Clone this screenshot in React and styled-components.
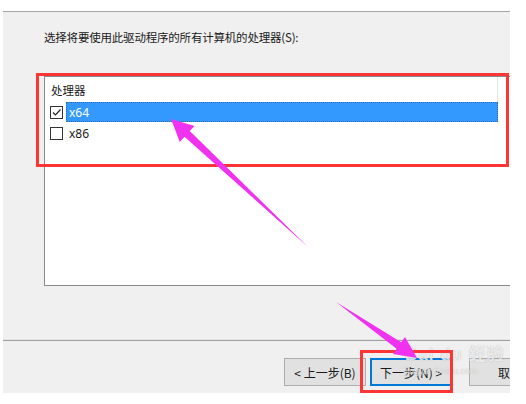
import React from 'react'
import styled, { createGlobalStyle } from 'styled-components'

const GlobalStyle = createGlobalStyle`
  html, body {
    margin: 0;
    padding: 0;
    background: #ffffff;
    font-family: "Noto Sans CJK SC", "Noto Sans", "Liberation Sans", sans-serif;
  }
`

const Page = styled.div`
  position: relative;
  width: 526px;
  height: 404px;
  overflow: hidden;
  background: #ffffff;
  padding-top: 11px;
  box-sizing: border-box;
`

const Dialog = styled.div`
  margin-left: 3px;
  width: 507px;
  height: 382px;
  background: #f0f0f0;
  border-top: 1px solid #a5a5a5;
  box-sizing: border-box;
  display: flex;
  flex-direction: column;
  overflow: hidden;
`

const Body = styled.div`
  height: 327px;
  padding: 17px 0 0 41px;
  box-sizing: border-box;
  display: flex;
  flex-direction: column;
`

const Prompt = styled.div`
  font-size: 11.5px;
  line-height: 16px;
  color: #1a1a1a;
  letter-spacing: -0.2px;
`

const ListBox = styled.div`
  margin-top: 31px;
  width: 480px;
  height: 210px;
  background: #ffffff;
  border: 1px solid #8a8a8a;
  box-sizing: border-box;
  display: flex;
  flex-direction: column;
`

const Header = styled.div`
  height: 25px;
  width: 453px;
  display: flex;
  align-items: center;
  padding-left: 6px;
  font-size: 11.5px;
  color: #1a1a1a;
  border-right: 1px solid #e5e5e5;
  box-sizing: border-box;
`

const Row = styled.div`
  height: 20px;
  display: flex;
  align-items: center;
  padding-left: 5px;
  margin-bottom: 1px;
`

const Box = styled.span`
  width: 11px;
  height: 11px;
  border: 1px solid #333333;
  background: #ffffff;
  display: flex;
  align-items: center;
  justify-content: center;
  flex-shrink: 0;
`

const Label = styled.span`
  margin-left: 3px;
  width: ${p => (p.$selected ? '432px' : 'auto')};
  height: 20px;
  display: flex;
  align-items: center;
  padding-left: 2px;
  box-sizing: border-box;
  font-family: "Noto Sans", "Liberation Sans", sans-serif;
  font-size: 12px;
  color: ${p => (p.$selected ? '#ffffff' : '#1a1a1a')};
  background: ${p => (p.$selected ? '#3399ff' : 'transparent')};
  border: 1px ${p => (p.$selected ? 'dotted #2d6aa8' : 'solid transparent')};
`

const Separator = styled.div`
  height: 2px;
  border-top: 1px solid #e3e3e3;
  border-bottom: 1px solid #a0a0a0;
  box-sizing: border-box;
`

const Footer = styled.div`
  flex: 1;
  display: flex;
  padding: 17px 0 0 281px;
  box-sizing: border-box;
`

const Button = styled.div`
  width: 82px;
  height: 28px;
  flex-shrink: 0;
  margin-right: ${p => p.$gap || 0}px;
  display: flex;
  align-items: center;
  justify-content: center;
  font-size: 12px;
  color: #1a1a1a;
  background: #e1e1e1;
  border: 1px solid ${p => (p.$default ? '#0078d7' : '#adadad')};
  box-shadow: ${p => (p.$default ? 'inset 0 0 0 1px #0078d7' : 'none')};
  box-sizing: border-box;
`

const Overlay = styled.svg`
  position: absolute;
  left: 0;
  top: 0;
  pointer-events: none;
`

const Watermark = styled.div`
  position: absolute;
  left: 405px;
  top: 345px;
  display: flex;
  flex-direction: column;
  color: rgba(255, 255, 255, 0.75);
  text-shadow: 0 0 1px rgba(120, 120, 120, 0.6);
  font-family: "Liberation Sans", "Noto Sans CJK SC", sans-serif;
  pointer-events: none;
`

const MarkTop = styled.div`
  font-size: 17px;
  font-weight: bold;
  line-height: 20px;
  letter-spacing: 1px;
`

const MarkUrl = styled.div`
  font-size: 9px;
  line-height: 12px;
`

function Check() {
  return (
    <svg width="11" height="11" viewBox="0 0 11 11">
      <path d="M2 5.5 L4.5 8 L9.5 2.5" fill="none" stroke="#222" strokeWidth="1.2" />
    </svg>
  )
}

const rows = [
  { name: 'x64', checked: true, selected: true },
  { name: 'x86', checked: false, selected: false },
]

export default function App() {
  return (
    <Page>
      <GlobalStyle />
      <Dialog>
        <Body>
          <Prompt>选择将要使用此驱动程序的所有计算机的处理器(S):</Prompt>
          <ListBox>
            <Header>处理器</Header>
            {rows.map(r => (
              <Row key={r.name}>
                <Box>{r.checked && <Check />}</Box>
                <Label $selected={r.selected}>{r.name}</Label>
              </Row>
            ))}
          </ListBox>
        </Body>
        <Separator />
        <Footer>
          <Button $gap={4}>&lt; 上一步(B)</Button>
          <Button $gap={17} $default>下一步(N) &gt;</Button>
          <Button>取消</Button>
        </Footer>
      </Dialog>

      <Watermark>
        <MarkTop>Bai du 经验</MarkTop>
        <MarkUrl>jingyan.baidu.com</MarkUrl>
      </Watermark>

      {/* annotation marks */}
      <Overlay width="526" height="404" viewBox="0 0 526 404">
        <rect x="37.5" y="74.5" width="470" height="91" fill="none" stroke="#fe3535" strokeWidth="3" />
        <rect x="361.5" y="351.5" width="90" height="40" fill="none" stroke="#fe3535" strokeWidth="3" />
        <polygon
          points="171,119 194.5,126 189.8,131 308,247 184.5,136.8 179.8,142"
          fill="#f032f0"
        />
        <polygon
          points="417,358 393,354 396.6,348.8 336,302 401.2,342.2 405,337"
          fill="#f032f0"
        />
      </Overlay>
    </Page>
  )
}
